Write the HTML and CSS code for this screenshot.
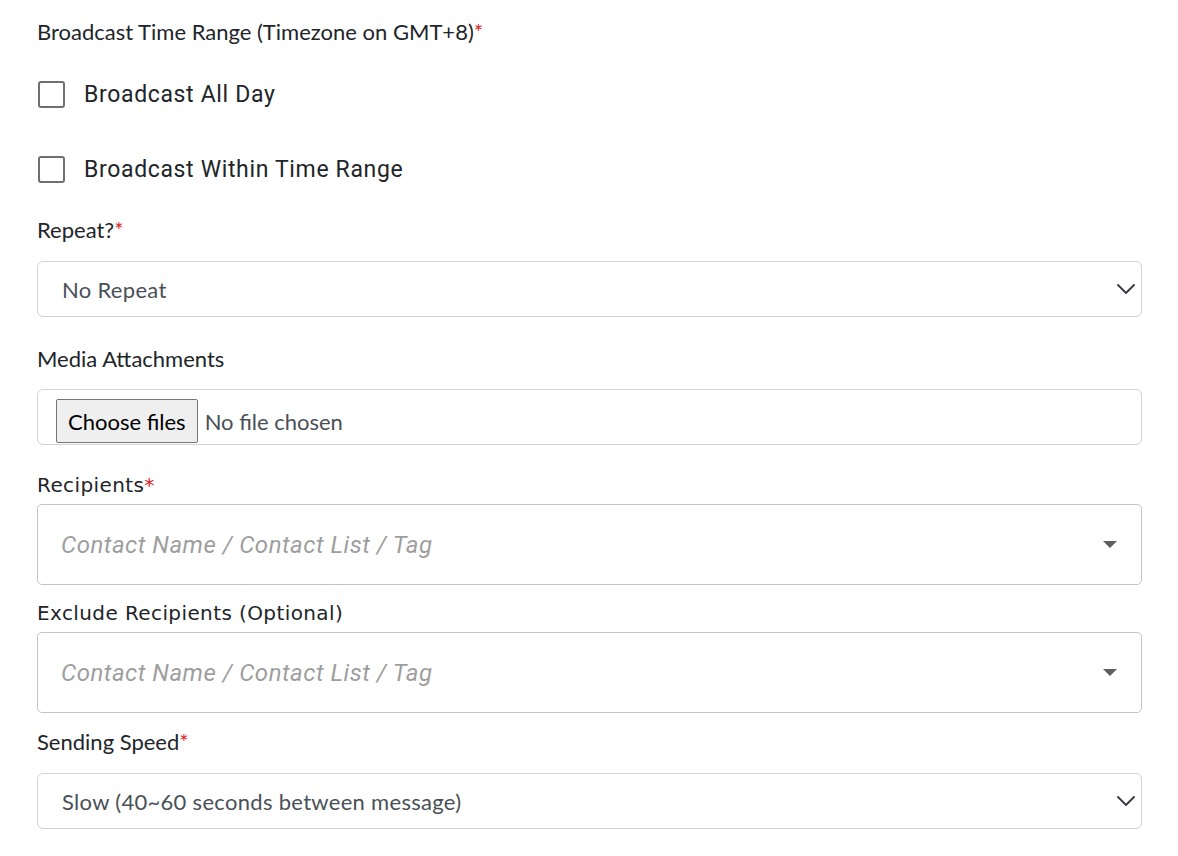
FILE: index.html
```html
<!DOCTYPE html>
<html>
<head>
<meta charset="utf-8">
<link rel="stylesheet" href="styles.css">
</head>
<body>
<form class="form">
  <div class="group g-time">
    <div class="label">Broadcast Time Range (Timezone on GMT+8)<span class="req">*</span></div>
    <label class="check first"><span class="box"></span><span class="check-text">Broadcast All Day</span></label>
    <label class="check second"><span class="box"></span><span class="check-text">Broadcast Within Time Range</span></label>
  </div>

  <div class="group g-repeat">
    <div class="label">Repeat?<span class="req">*</span></div>
    <div class="select"><span>No Repeat</span>
      <svg class="chev" width="18" height="10" viewBox="0 0 18 10"><path d="M1 1l8 8 8-8" fill="none" stroke="#343a40" stroke-width="1.8" stroke-linecap="round" stroke-linejoin="round"/></svg>
    </div>
  </div>

  <div class="group g-media">
    <div class="label">Media Attachments</div>
    <div class="file"><span class="file-btn">Choose files</span><span class="file-text">No file chosen</span></div>
  </div>

  <div class="group g-recip">
    <div class="label alt">Recipients<span class="req">*</span></div>
    <div class="multi"><span class="ph">Contact Name / Contact List / Tag</span><span class="tri"></span></div>
  </div>

  <div class="group g-excl">
    <div class="label alt">Exclude Recipients (Optional)</div>
    <div class="multi"><span class="ph">Contact Name / Contact List / Tag</span><span class="tri"></span></div>
  </div>

  <div class="group g-speed">
    <div class="label">Sending Speed<span class="req">*</span></div>
    <div class="select"><span>Slow (40~60 seconds between message)</span>
      <svg class="chev" width="18" height="10" viewBox="0 0 18 10"><path d="M1 1l8 8 8-8" fill="none" stroke="#343a40" stroke-width="1.8" stroke-linecap="round" stroke-linejoin="round"/></svg>
    </div>
  </div>
</form>
</body>
</html>
```

FILE: styles.css
```css
* { box-sizing: border-box; }
html, body { margin: 0; padding: 0; background: #fff; }
body { font-family: "Lato", "Liberation Sans", sans-serif; color: #212529; }
.form { width: 1142px; padding: 20px 0 0 37px; }
.label { font-size: 22px; line-height: 24px; height: 24px; white-space: nowrap; }
.label.alt { font-family: "DejaVu Sans", sans-serif; font-size: 20px; letter-spacing: 0.4px; }
.req { color: #e01d1d; letter-spacing: 0; }

.check { display: flex; align-items: center; height: 27px; padding-left: 1px; }
.check.first { margin-top: 37px; }
.check.second { margin-top: 48px; }
.box { width: 27px; height: 27px; border: 2.5px solid #6f6f6f; border-radius: 3px; flex: none; }
.check-text { font-family: "Roboto", sans-serif; font-size: 23px; letter-spacing: 0.65px; margin-left: 19px; color: #212529; }

.g-repeat { margin-top: 35px; }
.g-media { margin-top: 30px; }
.g-recip { margin-top: 28px; }
.g-excl { margin-top: 16px; }
.g-speed { margin-top: 17px; }

.select { margin-top: 19px; height: 56px; border: 1px solid #ced4da; border-radius: 6px; display: flex; align-items: center; justify-content: space-between; padding: 0 6px 0 24px; font-size: 22px; letter-spacing: 0.3px; color: #495057; }

.file { margin-top: 18px; height: 56px; border: 1px solid #ced4da; border-radius: 6px; display: flex; align-items: flex-end; padding: 0 0 1px 18px; font-size: 22px; color: #495057; }
.file-btn { height: 44px; padding: 0 11px; background: #efefef; border: 1px solid #767676; border-radius: 2px; color: #000; display: flex; align-items: center; }
.file-text { height: 44px; display: flex; align-items: center; margin-left: 7px; }

.multi { margin-top: 7px; height: 81px; border: 1px solid #c4c4c4; border-radius: 5px; display: flex; align-items: center; justify-content: space-between; padding: 0 24px 0 23px; }
.ph { font-family: "Roboto", sans-serif; font-style: italic; font-size: 24px; letter-spacing: 0.5px; color: #9e9e9e; }
.tri { width: 0; height: 0; border-left: 7.5px solid transparent; border-right: 7.5px solid transparent; border-top: 7px solid #5f5f5f; }
```
